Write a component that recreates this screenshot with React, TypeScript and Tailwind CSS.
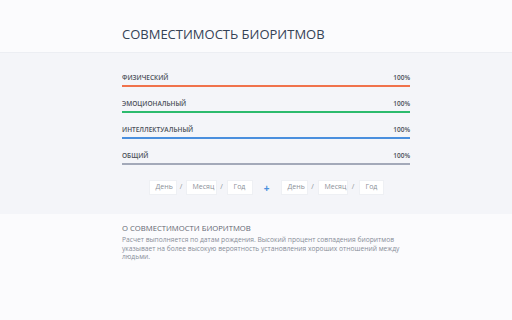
import React from "react";

const rows = [
  { label: "ФИЗИЧЕСКИЙ", color: "bg-[#f0724c]" },
  { label: "ЭМОЦИОНАЛЬНЫЙ", color: "bg-[#2dbb6e]" },
  { label: "ИНТЕЛЛЕКТУАЛЬНЫЙ", color: "bg-[#4a8fde]" },
  { label: "ОБЩИЙ", color: "bg-[#a3a9b9]" },
];

function Box({ text, w }: { text: string; w: string }) {
  return (
    <div className={`${w} h-[15px] bg-white border border-[#eef0f4] flex items-center pl-[6px] text-[7px] text-[#8a8f98]`}>
      {text}
    </div>
  );
}

function Slash({ w }: { w: string }) {
  return <span className={`${w} text-center text-[7px] text-[#8a8f98]`}>/</span>;
}

export default function App() {
  return (
    <div className="w-[512px] h-[320px] bg-[#fbfbfd] font-['Open_Sans',sans-serif] overflow-hidden">
      <div className="h-[53px] border-b border-[#eceef3] pl-[122px] pr-[102px] flex items-end pb-[9px]">
        <h1 className="text-[13px] leading-[17px] text-[#354256] font-normal">СОВМЕСТИМОСТЬ БИОРИТМОВ</h1>
      </div>
      <div className="bg-[#f4f5f9] pl-[122px] pr-[102px] pt-[20px] pb-[19px]">
        <div className="flex flex-col gap-[12px]">
          {rows.map((r) => (
            <div key={r.label} className="flex flex-col">
              <div className="flex justify-between text-[6.5px] leading-[10px] font-semibold text-[#4a4f58]">
                <span>{r.label}</span>
                <span>100%</span>
              </div>
              <div className={`mt-[2px] h-[2px] ${r.color}`} />
            </div>
          ))}
        </div>
        <div className="mt-[15px] flex justify-center items-center">
          <Box text="День" w="w-[28px]" />
          <Slash w="w-[9px]" />
          <Box text="Месяц" w="w-[31px]" />
          <Slash w="w-[10px]" />
          <Box text="Год" w="w-[26px]" />
          <span className="w-[28px] text-center text-[10px] leading-[10px] font-bold text-[#4a8fde]">+</span>
          <Box text="День" w="w-[27px]" />
          <Slash w="w-[10px]" />
          <Box text="Месяц" w="w-[30px]" />
          <Slash w="w-[11px]" />
          <Box text="Год" w="w-[25px]" />
        </div>
      </div>
      <div className="pl-[122px] pr-[102px] pt-[9px]">
        <h2 className="text-[7.7px] leading-[11px] text-[#5f6672] font-normal">О СОВМЕСТИМОСТИ БИОРИТМОВ</h2>
        <p className="mt-[2px] text-[6.7px] leading-[8.7px] text-[#878d98]">
          Расчет выполняется по датам рождения. Высокий процент совпадения биоритмов указывает на более высокую вероятность установления хороших отношений между людьми.
        </p>
      </div>
    </div>
  );
}
